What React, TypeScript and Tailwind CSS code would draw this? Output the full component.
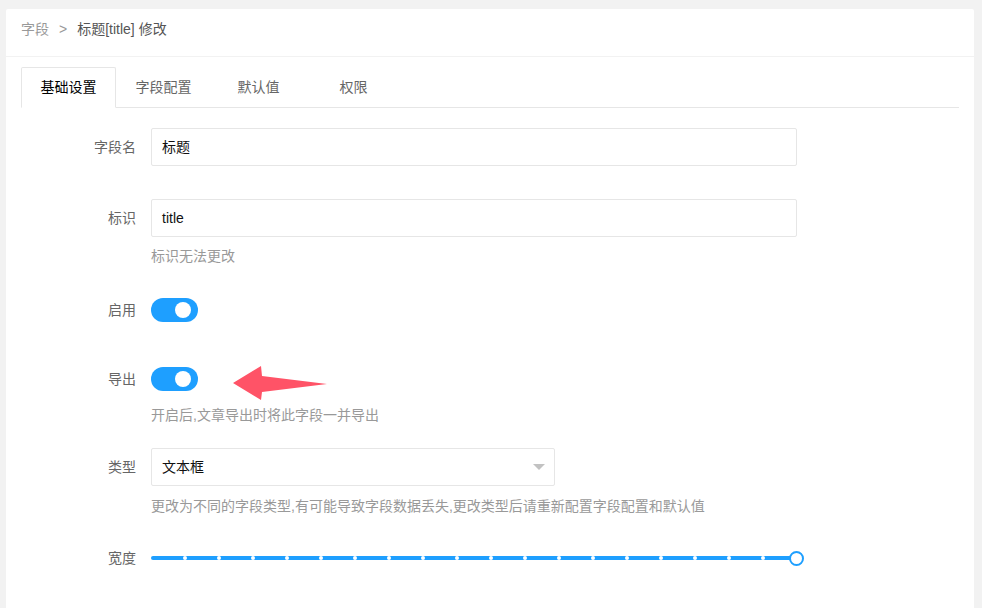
import React from "react";

const tabs = ["基础设置", "字段配置", "默认值", "权限"];

function Toggle() {
  return (
    <div className="w-[47px] h-[24px] rounded-full bg-[#1e9fff] flex items-center justify-end pr-[7px]">
      <div className="w-[16px] h-[16px] rounded-full bg-white" />
    </div>
  );
}

function Label({ text }: { text: string }) {
  return (
    <div className="w-[130px] shrink-0 pr-[15px] text-right text-[#666] text-[14px] leading-[20px]">
      {text}
    </div>
  );
}

function Hint({ text, className = "" }: { text: string; className?: string }) {
  return (
    <div className={`pl-[130px] text-[14px] leading-[20px] text-[#999] ${className}`}>{text}</div>
  );
}

export default function App() {
  const ticks = Array.from({ length: 18 }, (_, i) => (i + 1) * 34);
  return (
    <div className="h-[608px] overflow-hidden bg-[#f2f2f2] pt-[9px] pl-[6px] font-['Liberation_Sans','Noto_Sans_CJK_SC',sans-serif]">
      <div className="w-[968px] h-[620px] bg-white rounded-[2px]">
        <div className="h-[48px] border-b border-[#f2f2f2] px-[15px] pt-[10px] text-[14px] leading-[20px] flex">
          <span className="text-[#999]">字段</span>
          <span className="text-[#999] mx-[10px]">&gt;</span>
          <span className="text-[#555]">标题[title] 修改</span>
        </div>

        <div className="px-[15px] pt-[10px]">
          <div className="flex border-b border-[#e6e6e6]">
            {tabs.map((t, i) => (
              <div
                key={t}
                className={
                  i === 0
                    ? "w-[95px] h-[41px] -mb-px flex items-center justify-center border border-[#e6e6e6] border-b-white bg-white rounded-t-[2px] text-[14px] text-black"
                    : "w-[95px] h-[40px] flex items-center justify-center text-[14px] text-[#666]"
                }
              >
                {t}
              </div>
            ))}
          </div>

          <div className="flex items-center mt-[20px]">
            <Label text="字段名" />
            <div className="w-[646px] h-[38px] border border-[#e6e6e6] rounded-[2px] pl-[10px] flex items-center text-[14px] text-[#111]">
              标题
            </div>
          </div>

          <div className="flex items-center mt-[33px]">
            <Label text="标识" />
            <div className="w-[646px] h-[38px] border border-[#e6e6e6] rounded-[2px] pl-[10px] flex items-center text-[14px] text-[#111]">
              title
            </div>
          </div>
          <Hint text="标识无法更改" className="mt-[9px]" />

          <div className="flex items-center h-[24px] mt-[32px]">
            <Label text="启用" />
            <Toggle />
          </div>

          <div className="relative flex items-center h-[24px] mt-[45px]">
            <Label text="导出" />
            <Toggle />
            <svg
              className="absolute left-[212px] top-[-1px]"
              width="96"
              height="35"
              viewBox="0 0 96 35"
            >
              <polygon
                points="0,17 28,0 29,10 94,18 29,26 28,34"
                fill="#ff5367"
              />
            </svg>
          </div>
          <Hint text="开启后,文章导出时将此字段一并导出" className="mt-[14px]" />

          <div className="flex items-center mt-[23px]">
            <Label text="类型" />
            <div className="w-[404px] h-[38px] border border-[#e6e6e6] rounded-[2px] pl-[10px] pr-[9px] flex items-center justify-between text-[14px] text-[#111]">
              <span>文本框</span>
              <span className="w-0 h-0 border-x-[6px] border-x-transparent border-t-[6px] border-t-[#c2c2c2]" />
            </div>
          </div>
          <Hint
            text="更改为不同的字段类型,有可能导致字段数据丢失,更改类型后请重新配置字段配置和默认值"
            className="mt-[10px]"
          />

          <div className="flex items-center h-[20px] mt-[32px]">
            <Label text="宽度" />
            <div className="relative w-[646px] h-[4px] rounded-[3px] bg-[#1e9fff]">
              {ticks.map((x) => (
                <div
                  key={x}
                  className="absolute top-0 w-[4px] h-[4px] rounded-full bg-white"
                  style={{ left: x - 2 }}
                />
              ))}
              <div className="absolute right-[-7px] top-[-5.5px] w-[15px] h-[15px] rounded-full border-2 border-[#1e9fff] bg-white" />
            </div>
          </div>
        </div>
      </div>
    </div>
  );
}
